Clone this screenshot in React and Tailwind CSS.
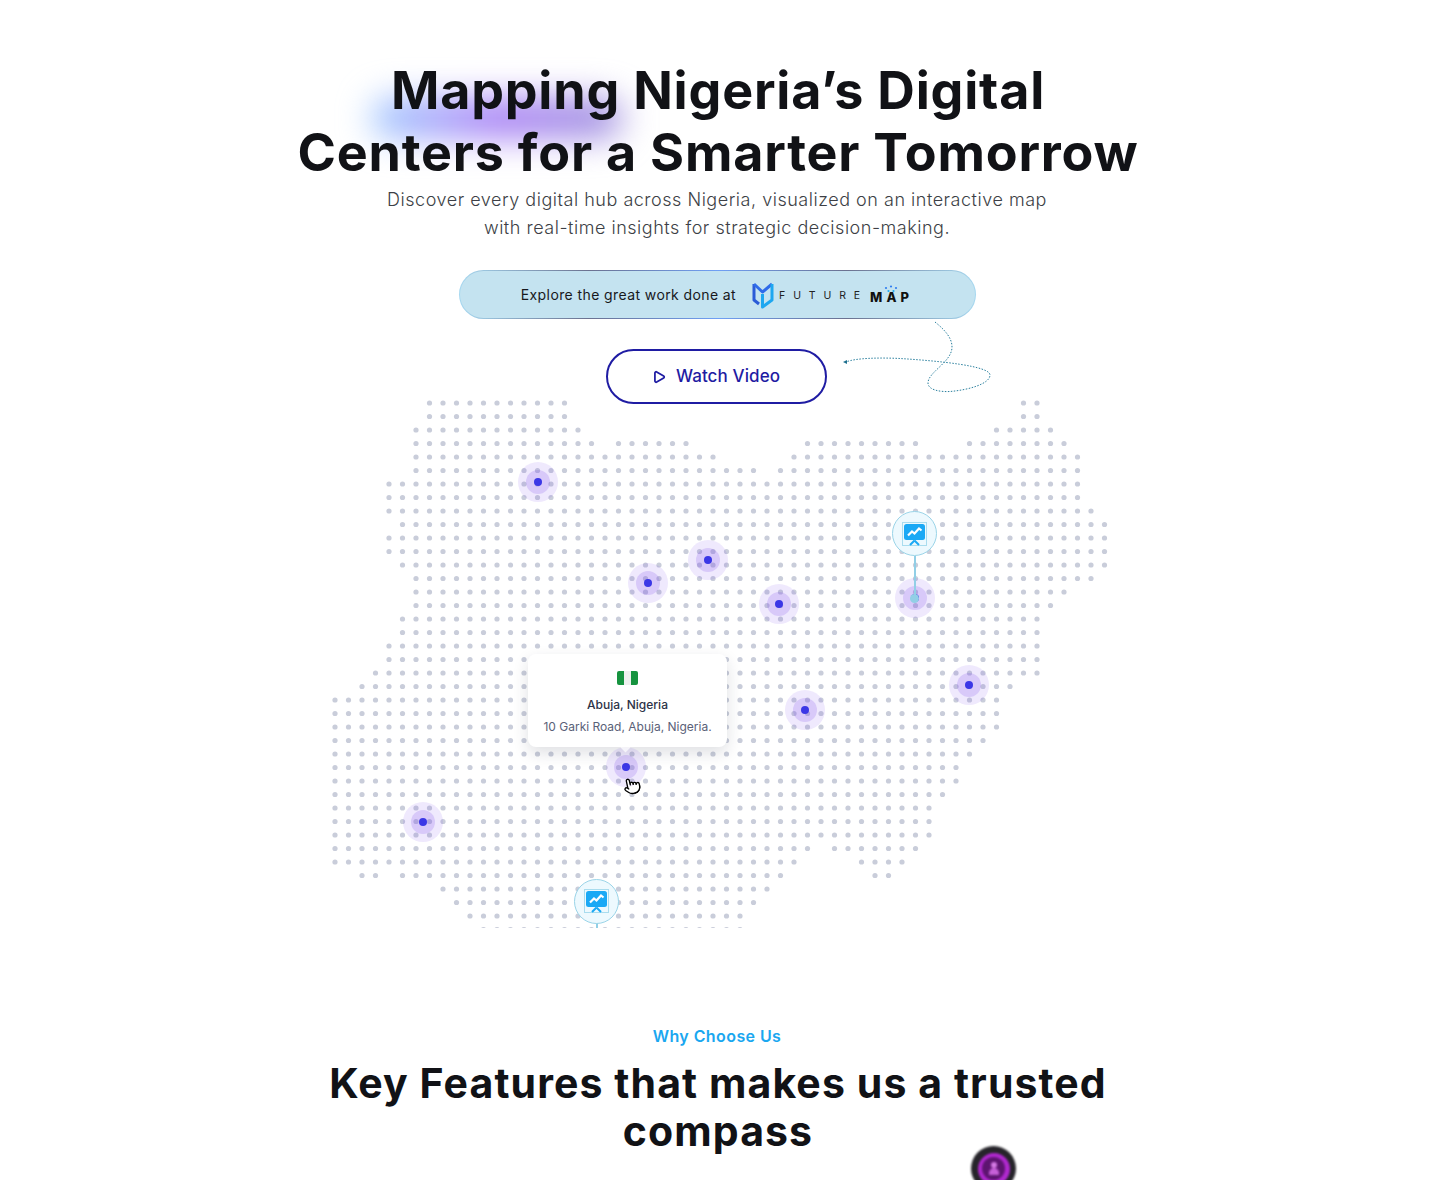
import { Play, Pointer } from 'lucide-react';

// Dot map: each row lists its [first, last] column spans
const ROWS = [
  [[7, 17], [51, 52]],
  [[7, 17], [51, 52]],
  [[6, 18], [49, 53]],
  [[6, 19], [21, 26], [35, 43], [47, 54]],
  [[6, 28], [34, 55]],
  [[6, 31], [33, 55]],
  [[4, 55]],
  [[4, 55]],
  [[4, 56]],
  [[5, 57]],
  [[4, 57]],
  [[4, 57]],
  [[5, 57]],
  [[6, 56]],
  [[6, 54]],
  [[6, 53]],
  [[5, 52]],
  [[5, 52]],
  [[4, 52]],
  [[4, 52]],
  [[3, 52]],
  [[2, 50]],
  [[0, 49]],
  [[0, 49]],
  [[0, 49]],
  [[0, 48]],
  [[0, 47]],
  [[0, 46]],
  [[0, 46]],
  [[0, 45]],
  [[0, 44]],
  [[0, 44]],
  [[0, 44]],
  [[0, 35], [37, 43]],
  [[0, 34], [39, 42]],
  [[2, 3], [5, 33], [40, 41]],
  [[8, 32]],
  [[9, 31]],
  [[10, 30]],
  [[11, 30]],
];

const PINS = [
  { x: 205.5, y: 81.5 },
  { x: 316, y: 183 },
  { x: 376, y: 159.5 },
  { x: 447, y: 204 },
  { x: 582.5, y: 198 },
  { x: 637, y: 285 },
  { x: 473, y: 310 },
  { x: 293.5, y: 367 },
  { x: 90.5, y: 421.5 },
];

function DotMap() {
  const dots = [];
  ROWS.forEach((spans, row) => {
    spans.forEach(([from, to]) => {
      for (let col = from; col <= to; col++) {
        dots.push(<circle key={`${row}-${col}`} cx={3 + col * 13.5} cy={3 + row * 13.5} r="2.6" fill="#c9cdda" />);
      }
    });
  });
  return (
    <svg width="780" height="528" className="block">
      {dots}
    </svg>
  );
}

function Pin({ x, y }) {
  return (
    <div className="absolute" style={{ left: x, top: y }}>
      <div className="absolute -left-5 -top-5 h-10 w-10 rounded-full bg-[#7c4deb]/12" />
      <div className="absolute -left-3 -top-3 h-6 w-6 rounded-full bg-[#7c4deb]/20" />
      <div className="absolute -left-1 -top-1 h-2 w-2 rounded-full bg-[#3b37e6]" />
    </div>
  );
}

function ChartBadge({ x, y, stem }) {
  return (
    <div className="absolute" style={{ left: x, top: y }}>
      <div className="absolute -left-px top-[22px] w-0.5 bg-[#92cfe6]" style={{ height: stem }} />
      <div className="absolute -left-[22.5px] -top-[22.5px] flex h-[45px] w-[45px] items-center justify-center rounded-full border border-[#9ad4e8] bg-[#edf9fe]">
        <svg width="25" height="24" viewBox="0 0 25 24">
          <rect x="0.5" y="0.5" width="24" height="23" fill="none" stroke="#a9dcee" />
          <rect x="2" y="2" width="21" height="16" rx="2.5" fill="#1ba9f5" />
          <polyline points="6,13.5 10,9.5 12.5,11.5 17,6.5 19.5,8.5" fill="none" stroke="#fff" strokeWidth="2.2" />
          <path d="M12.5 18.5 L8 23 M12.5 18.5 L17 23" fill="none" stroke="#1ba9f5" strokeWidth="2" />
        </svg>
      </div>
    </div>
  );
}

function FutureMapLogo() {
  return (
    <div className="flex items-center">
      <svg width="22" height="28" viewBox="0 0 22 28" fill="none">
        <path d="M2 3 V19 L7 23" stroke="#2a5bd7" strokeWidth="3" strokeLinejoin="round" />
        <path d="M2 3 L10.5 11 L20 3" stroke="#2f6bea" strokeWidth="3" strokeLinejoin="round" />
        <path d="M20 3 V19 L10.5 26 V13" stroke="#1ea7f0" strokeWidth="3" strokeLinejoin="round" />
      </svg>
      <span className="ml-[5px] mt-1 text-[10.5px] leading-none tracking-[0.75em] text-[#222]">FUTURE</span>
      <span className="relative ml-[2px] mt-[5px] text-[13px] font-extrabold leading-none tracking-[0.32em] text-[#111]">
        MAP
        <svg width="14" height="8" viewBox="0 0 14 8" className="absolute left-[14px] -top-[6px]">
          <circle cx="2" cy="3" r="1.1" fill="#2f7df0" />
          <circle cx="7" cy="1.5" r="1.1" fill="#2f7df0" />
          <circle cx="12" cy="3" r="1.1" fill="#2f7df0" />
          <circle cx="4.5" cy="6" r="1.1" fill="#1ea7f0" />
          <circle cx="9.5" cy="6" r="1.1" fill="#1ea7f0" />
        </svg>
      </span>
    </div>
  );
}

export default function App() {
  return (
    <div className="relative h-[1180px] w-full overflow-hidden bg-white font-['Inter',sans-serif]">
      <div className="absolute left-[372px] top-[98px] h-[40px] w-[250px] rounded-full bg-gradient-to-r from-[#9ccaff] via-[#a67df5] to-[#9d8fdc] blur-[17px]" />

      <div className="relative flex flex-col items-center pt-[60px]">
        <h1 className="pl-0.5 text-center text-[52px] font-bold leading-[62px] tracking-[0.8px] text-[#111216]">
          Mapping Nigeria’s Digital
          <br />
          Centers for a Smarter Tomorrow
        </h1>
        <p className="mt-[2px] text-center text-[18px] font-light leading-[28px] tracking-[0.52px] text-[#3d3f46]">
          Discover every digital hub across Nigeria, visualized on an interactive map
          <br />
          with real-time insights for strategic decision-making.
        </p>

        <div className="mt-[28px] h-[49px] w-[517px] rounded-full bg-[linear-gradient(90deg,#a6d8f0_0%,#6b7290_25%,#6fa0f5_50%,#6b7290_75%,#a6d8f0_100%)] p-px">
          <div className="flex h-full items-center justify-center gap-[16px] rounded-full bg-[#c4e3f0]">
            <span className="text-[14px] tracking-[0.4px] text-[#17181c]">Explore the great work done at</span>
            <FutureMapLogo />
          </div>
        </div>

        <button className="mr-0.5 mt-[30px] flex h-[55px] w-[221px] items-center justify-center gap-[10px] rounded-full border-2 border-[#1f1ca3] bg-white text-[17px] font-medium tracking-[0.1px] text-[#1f1ca3]">
          <Play size={14} strokeWidth={3} />
          Watch Video
        </button>

        <div className="relative -mt-1 ml-[332px] h-[528px] w-[780px] self-start overflow-hidden">
          <DotMap />
          {PINS.map((p) => (
            <Pin key={`${p.x}-${p.y}`} x={p.x} y={p.y} />
          ))}
          <ChartBadge x={582.5} y={133.5} stem={42} />
          <div className="absolute left-[578px] top-[193.5px] h-[9px] w-[9px] rounded-full bg-[#92cfe6]" />
          <ChartBadge x={264.5} y={501} stem={10} />

          <div className="absolute left-[196px] top-[254px] flex h-[93px] w-[199px] flex-col items-center rounded-lg bg-white pt-[17px] shadow-[0_6px_16px_rgba(30,35,60,0.14)]">
            <div className="flex h-[14px] w-[21px] overflow-hidden rounded-[2px]">
              <div className="flex-1 bg-[#16933f]" />
              <div className="flex-1 bg-[#eef0ef]" />
              <div className="flex-1 bg-[#16933f]" />
            </div>
            <div className="mt-[12px] text-[12px] font-medium leading-4 text-[#2d3348]">Abuja, Nigeria</div>
            <div className="mt-[6px] text-[12px] leading-4 text-[#5a6178]">10 Garki Road, Abuja, Nigeria.</div>
            <div className="absolute left-[94px] top-[90px] h-[7px] w-[7px] rotate-45 bg-white/70" />
          </div>

          <Pointer size={18} strokeWidth={1.8} className="absolute left-[291px] top-[377px] -rotate-12 fill-white text-black" />
        </div>

        <div className="mt-[96px] text-[16px] font-semibold leading-6 tracking-[0.42px] text-[#1aa7f0]">Why Choose Us</div>
        <h2 className="mt-[11px] max-w-[800px] pl-0.5 text-center text-[41px] font-bold leading-[48px] tracking-[1.1px] text-[#111216]">
          Key Features that makes us a trusted compass
        </h2>
      </div>

      {/* Curly dotted arrow from the banner to the button */}
      <svg width="1434" height="420" className="pointer-events-none absolute left-0 top-0" fill="none">
        <path
          d="M935 322 C945 330 952 338 952 347 C952 362 928 372 928 383 C928 390 940 392 950 391.5 C968 390 990 384 990 375 C990 366 940 361 900 358.5 C880 357.5 855 358 846 362"
          stroke="#2a7f9e"
          strokeWidth="1"
          strokeDasharray="1.5 1.5"
        />
        <path d="M843 362 L847 360 L847 364 Z" fill="#1d6f8e" />
      </svg>

      {/* Floating assistant button, cut off by the window */}
      <div className="absolute left-[971px] top-[1146px] flex h-[45px] w-[45px] items-center justify-center rounded-full bg-[#26242a] blur-[1px]">
        <div className="flex h-[32px] w-[32px] items-center justify-center rounded-full bg-[#b028cf]">
          <div className="flex h-[23px] w-[23px] flex-col items-center justify-center rounded-full bg-[#5d1470]">
            <div className="h-[6px] w-[6px] rounded-full bg-[#d77be6]" />
            <div className="h-[7px] w-[10px] rounded-t-full bg-[#c65fd8]" />
          </div>
        </div>
      </div>
    </div>
  );
}
